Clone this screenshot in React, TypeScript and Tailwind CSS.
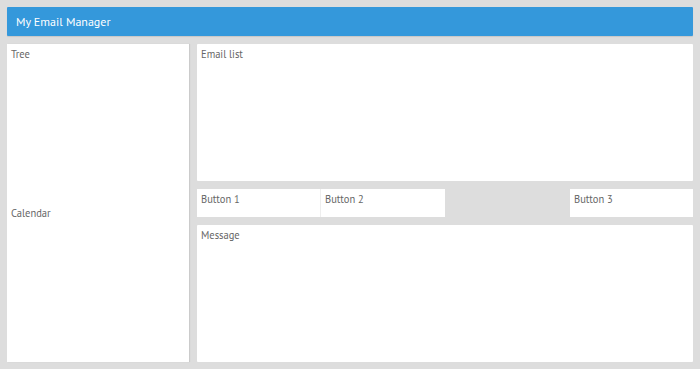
const font = "font-['PT_Sans','Open_Sans','Noto_Sans',sans-serif]";

const Cell = ({ label, className = "" }: { label: string; className?: string }) => (
  <div className={"bg-white px-[4px] pt-[3px] text-[10.5px] leading-[14px] text-[#666] " + className}>
    {label}
  </div>
);

export default function App() {
  return (
    <div className={"w-[700px] h-[369px] bg-[#dddddd] p-[7px] flex flex-col gap-[8px] " + font}>
      <div className="h-[29px] bg-[#3498db] rounded-[1px] flex items-center pl-[9px] text-white text-[12px] shadow-[0_1px_1px_rgba(0,0,0,0.1)]">
        My Email Manager
      </div>
      <div className="flex-1 flex gap-[8px] min-h-0">
        <div className="w-[182px] flex flex-col bg-white shadow-[1px_0_1px_rgba(0,0,0,0.08)]">
          <Cell label="Tree" className="flex-1" />
          <Cell label="Calendar" className="flex-1" />
        </div>
        <div className="flex-1 flex flex-col gap-[8px]">
          <Cell label="Email list" className="h-[137px] rounded-[1px]" />
          <div className="h-[28px] flex">
            <Cell label="Button 1" className="w-[124px] border-r border-[#eee]" />
            <Cell label="Button 2" className="w-[124px]" />
            <div className="flex-1" />
            <Cell label="Button 3" className="w-[123px]" />
          </div>
          <Cell label="Message" className="flex-1 rounded-[1px]" />
        </div>
      </div>
    </div>
  );
}
